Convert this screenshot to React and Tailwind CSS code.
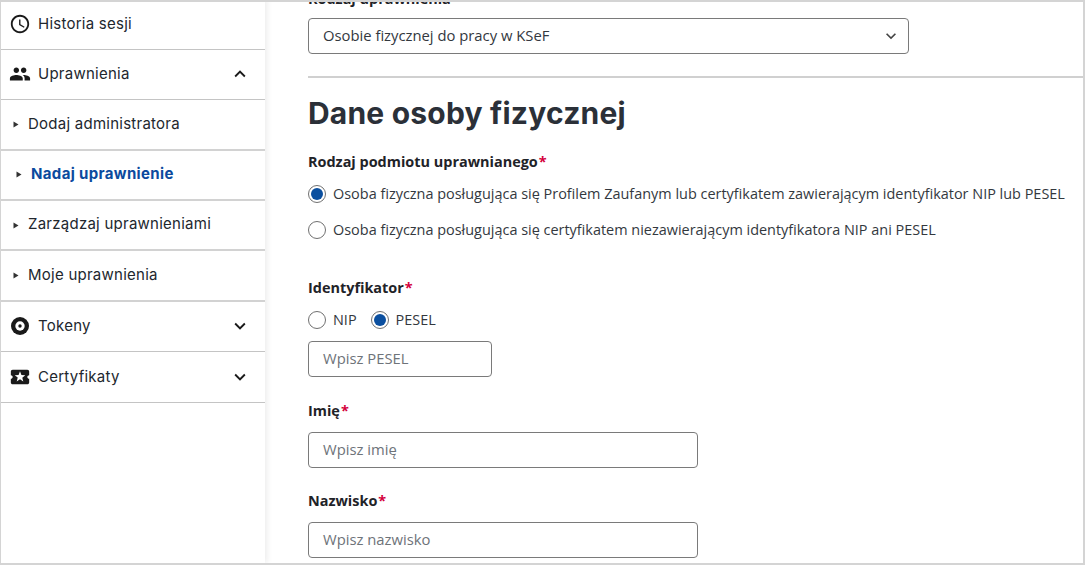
import React from 'react'
import { MdAccessTime, MdPeople, MdLocalActivity, MdExpandMore, MdExpandLess } from 'react-icons/md'

const sideFont = 'font-["Inter",sans-serif] text-[15px] tracking-[0.25px] text-[#22272e]'
const field = 'h-[36px] border border-[#7a7a7a] rounded-[4px] bg-white flex items-center px-[14px] text-[14.8px]'

function TokenIcon() {
  return (
    <svg width="18" height="18" viewBox="0 0 18 18">
      <circle cx="9" cy="9" r="9" fill="#1a1a1a" />
      <circle cx="9" cy="9" r="4.7" fill="#fff" />
      <circle cx="9" cy="9" r="1.7" fill="#1a1a1a" />
    </svg>
  )
}

function NavItem({ icon: Icon, label, open, size = 22 }) {
  return (
    <div className="h-[50.4px] border-b border-[#c4c4c4] flex items-center pl-[8px] pr-[14px]">
      <div className="w-[22px] flex justify-center"><Icon size={size} color="#1a1a1a" /></div>
      <span className={`ml-[7px] flex-1 ${sideFont}`}>{label}</span>
      {open === true && <MdExpandLess size={22} color="#1a1a1a" />}
      {open === false && <MdExpandMore size={22} color="#1a1a1a" />}
    </div>
  )
}

function SubItem({ label, active }) {
  return (
    <div className={`h-[50.4px] border-b-2 border-[#d2d2d2] flex items-center ${active ? 'pl-[15px]' : 'pl-[12px]'}`}>
      <svg width="6" height="7" viewBox="0 0 6 7"><path d="M0.5 0.5 L5.5 3.5 L0.5 6.5 Z" fill="#333" /></svg>
      {active
        ? <span className="ml-[9px] -mt-[1px] font-['Inter',sans-serif] font-bold text-[15px] tracking-[0.35px] text-[#0b4a9e]">{label}</span>
        : <span className={`ml-[9px] -mt-[1px] ${sideFont}`}>{label}</span>}
    </div>
  )
}

function Radio({ checked }) {
  return (
    <span className="w-[18px] h-[18px] shrink-0 rounded-full border border-[#707070] bg-white flex items-center justify-center">
      {checked && <span className="w-[12px] h-[12px] rounded-full bg-[#0b4f9f]" />}
    </span>
  )
}

function Label({ children, className = '' }) {
  return (
    <div className={`font-bold text-[14.45px] leading-[20px] text-[#1f2328] ${className}`}>
      {children}<span className="text-[#d4003c] ml-[1px]">*</span>
    </div>
  )
}

export default function App() {
  return (
    <div className="w-[1085px] h-[565px] overflow-hidden bg-white flex border-t-2 border-b-2 border-r-2 border-l border-[#d4d4d4] font-['Open_Sans',sans-serif] text-[#33383e]">
      {/* side menu */}
      <aside className="w-[264px] shrink-0 shadow-[2px_0_6px_rgba(0,0,0,0.08)] z-10 -mt-[2.6px]">
        <NavItem icon={MdAccessTime} label="Historia sesji" />
        <NavItem icon={MdPeople} label="Uprawnienia" open={true} size={24} />
        <SubItem label="Dodaj administratora" />
        <SubItem label="Nadaj uprawnienie" active />
        <SubItem label="Zarządzaj uprawnieniami" />
        <SubItem label="Moje uprawnienia" />
        <NavItem icon={TokenIcon} label="Tokeny" open={false} />
        <NavItem icon={MdLocalActivity} label="Certyfikaty" open={false} />
      </aside>

      {/* form */}
      <main className="flex-1 pt-0">
        <div className="pl-[43px] h-[16px] overflow-hidden">
          <div className="-mt-[13px] font-bold text-[14.45px] leading-[20px] text-[#1f2328]">Rodzaj uprawnienia</div>
        </div>
        <div className="pl-[43px]">
          <div className={`${field} w-[601px] justify-between pr-[7px]`}>
            <span className="-mt-[1px]">Osobie fizycznej do pracy w KSeF</span>
            <MdExpandMore size={20} color="#444" />
          </div>
        </div>
        <div className="ml-[43px] mt-[22px] border-t-2 border-[#d0d0d0]" />
        <h1 className="ml-[43px] mt-[15px] font-['Inter',sans-serif] font-bold text-[30px] tracking-[0.2px] leading-[40px] text-[#2b3038]">Dane osoby fizycznej</h1>
        <div className="pl-[43px]">
          <Label className="mt-[19px]">Rodzaj podmiotu uprawnianego</Label>
          <div className="mt-[11px] flex items-center gap-[7px] h-[22px] text-[14.44px]">
            <Radio checked />
            <span>Osoba fizyczna posługująca się Profilem Zaufanym lub certyfikatem zawierającym identyfikator NIP lub PESEL</span>
          </div>
          <div className="mt-[14px] flex items-center gap-[7px] h-[22px] text-[14.44px]">
            <Radio />
            <span>Osoba fizyczna posługująca się certyfikatem niezawierającym identyfikatora NIP ani PESEL</span>
          </div>

          <Label className="mt-[37px]">Identyfikator</Label>
          <div className="mt-[11px] flex items-center h-[22px] text-[14.44px]">
            <Radio />
            <span className="ml-[7px]">NIP</span>
            <span className="ml-[14px]"><Radio checked /></span>
            <span className="ml-[7px]">PESEL</span>
          </div>
          <div className={`${field} mt-[10px] w-[184px] text-[#6e7379]`}><span className="-mt-[1px]">Wpisz PESEL</span></div>

          <Label className="mt-[24px]">Imię</Label>
          <div className={`${field} mt-[11px] w-[390px] text-[#6e7379]`}><span className="-mt-[1px]">Wpisz imię</span></div>

          <Label className="mt-[23px]">Nazwisko</Label>
          <div className={`${field} mt-[11px] w-[390px] text-[#6e7379]`}><span className="-mt-[1px]">Wpisz nazwisko</span></div>
        </div>
      </main>
    </div>
  )
}
